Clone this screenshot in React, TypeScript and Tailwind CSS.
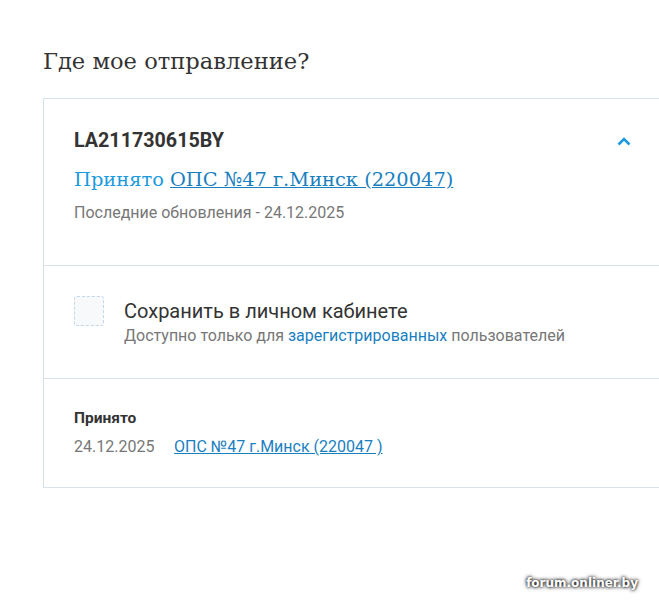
export default function App() {
  return (
    <div className="relative w-[659px] h-[606px] overflow-hidden bg-white font-['Roboto',sans-serif] text-[#333]">
      <div className="pl-[43px] pt-[46px]">
        <h1 className="font-['DejaVu_Serif',serif] text-[22.6px] leading-[30px] text-[#333] m-0">Где мое отправление?</h1>

        <div className="mt-[22px] w-[700px] border border-[#d7e1e9]">
          <div className="px-[30px] pt-[30px] pb-[42px] border-b border-[#d7e1e9]">
            <div className="flex items-center w-[560px]">
              <span className="text-[19.7px] font-bold leading-[24px] text-[#333]">LA211730615BY</span>
              <svg className="ml-auto mr-[3px]" width="14" height="9" viewBox="0 0 14 9" fill="none">
                <polyline points="1.5,7.5 7,2 12.5,7.5" stroke="#1b9ae0" strokeWidth="2.6" />
              </svg>
            </div>
            <div className="mt-[14px] font-['DejaVu_Serif',serif] text-[19.4px] leading-[26px] text-[#1b9ae0]">
              Принято <a href="#" className="underline text-[#1a7fbf]">ОПС №47 г.Минск (220047)</a>
            </div>
            <div className="mt-[10px] text-[16px] leading-[20px] text-[#777]">Последние обновления - 24.12.2025</div>
          </div>

          <div className="px-[30px] pt-[30px] pb-[32px] border-b border-[#d7e1e9] flex items-start">
            <div className="w-[30px] h-[30px] rounded-[3px] border border-dashed border-[#c5d6e6] bg-[#f7f9fb]" />
            <div className="ml-[20px] pt-[3px]">
              <div className="text-[20px] leading-[24px] text-[#333]">Сохранить в личном кабинете</div>
              <div className="mt-[3px] text-[16px] leading-[20px] text-[#777]">
                Доступно только для <a href="#" className="text-[#1a7fbf]">зарегистрированных</a> пользователей
              </div>
            </div>
          </div>

          <div className="px-[30px] pt-[29px] pb-[30px]">
            <div className="text-[15.5px] font-bold leading-[20px] text-[#333]">Принято</div>
            <div className="mt-[9px] flex text-[16px] leading-[20px]">
              <span className="text-[#777] w-[100px]">24.12.2025</span>
              <a href="#" className="underline text-[#1a7fbf]">ОПС №47 г.Минск (220047 )</a>
            </div>
          </div>
        </div>
      </div>

      <div className="absolute right-[21px] bottom-[14px] text-[12px] font-bold font-['DejaVu_Sans',sans-serif] text-white [text-shadow:0_0_3px_#000,0_0_4px_#333]">
        forum.onliner.by
      </div>
    </div>
  );
}
